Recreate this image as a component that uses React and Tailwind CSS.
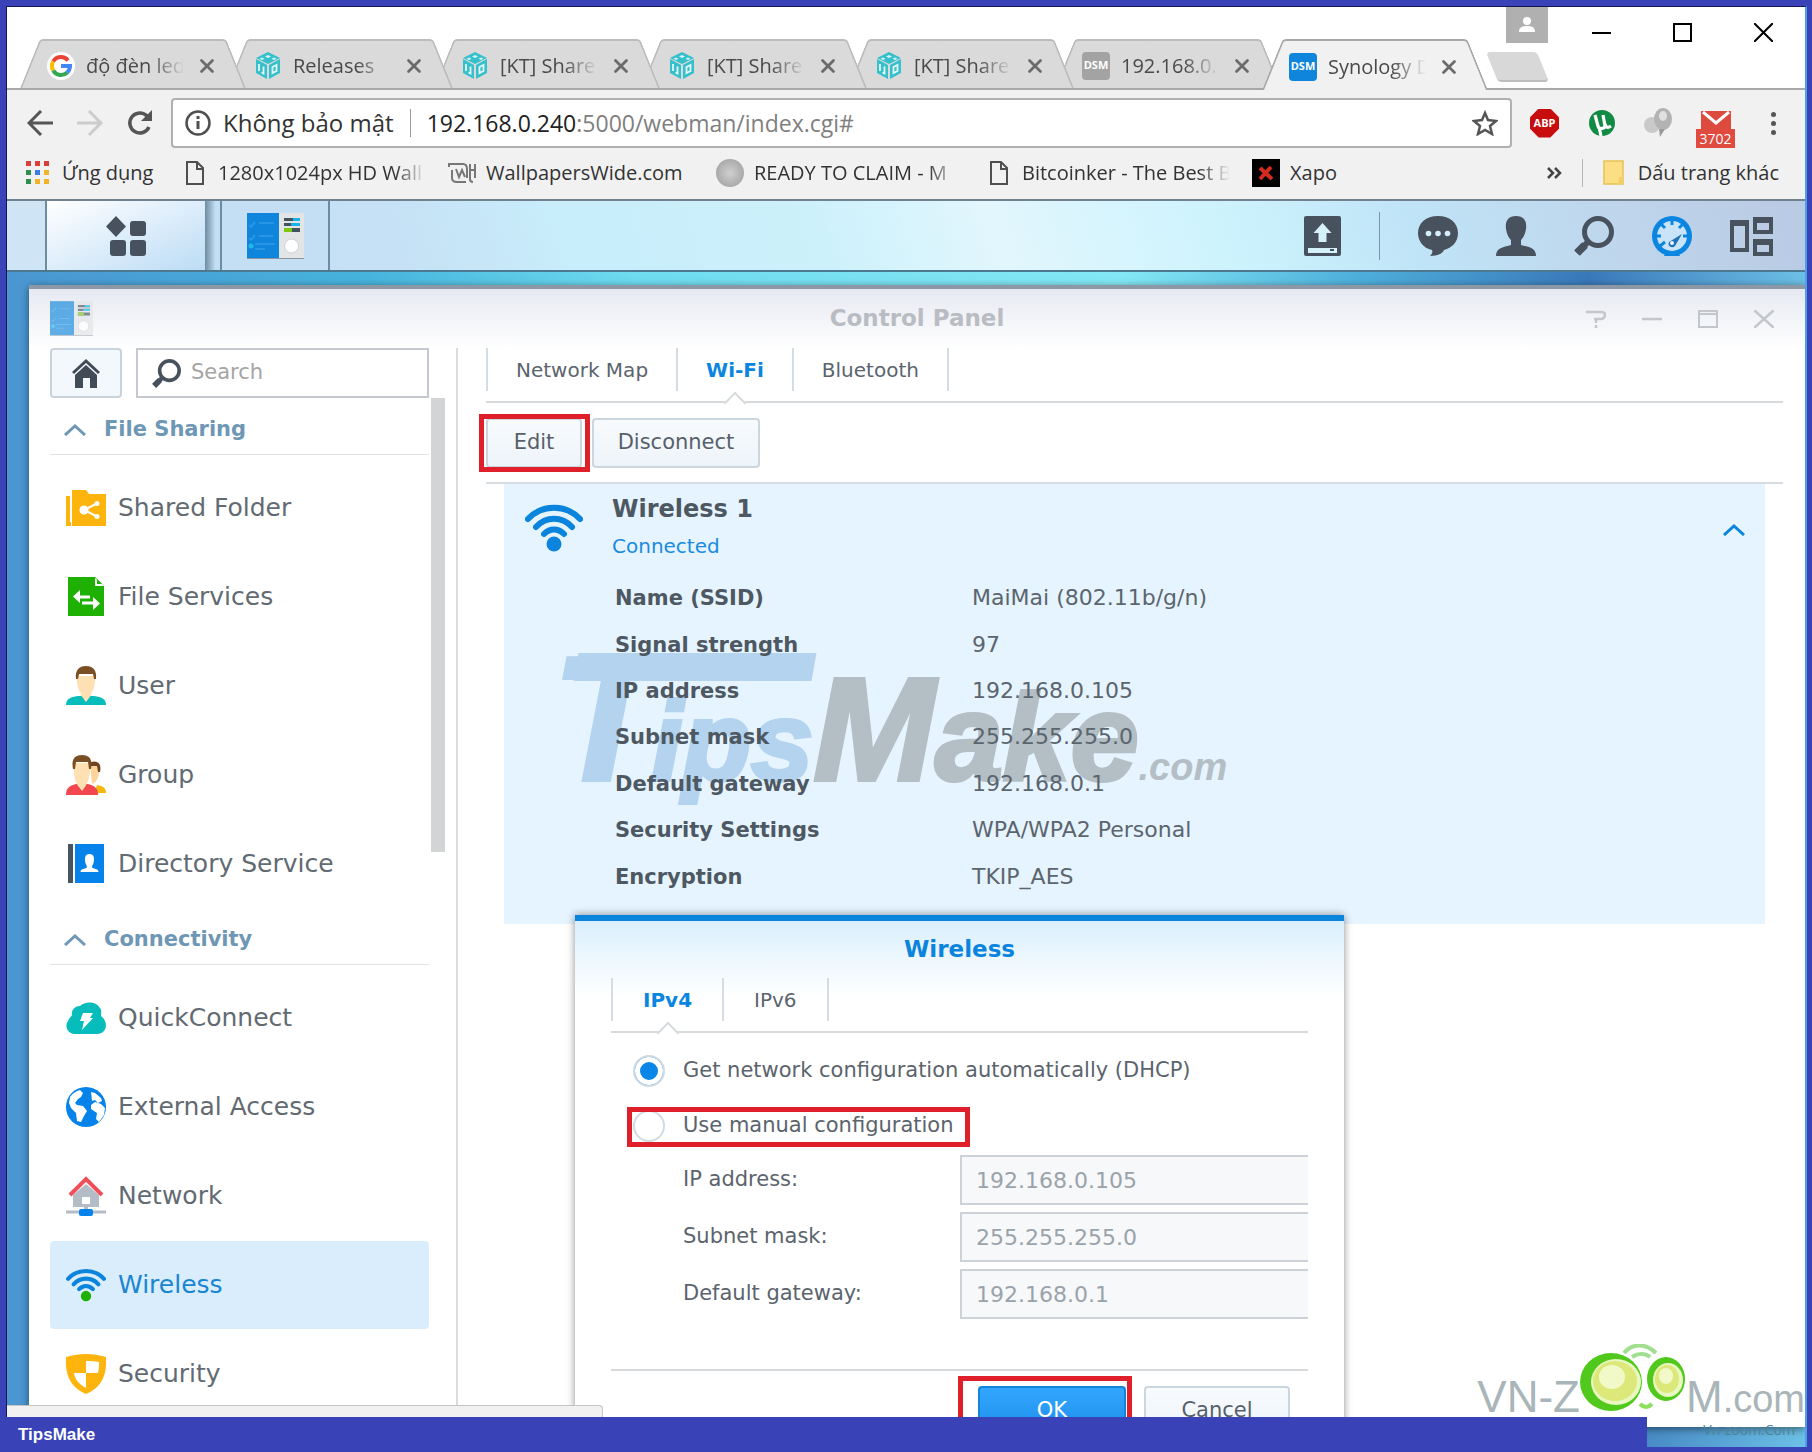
import React, { useState } from 'react';
import clsx from 'clsx';
import { X } from 'lucide-react';

const browserTabs = [
  { title: 'độ đèn led', icon: 'google' },
  { title: 'Releases', icon: 'cube' },
  { title: '[KT] Share', icon: 'cube' },
  { title: '[KT] Share', icon: 'cube' },
  { title: '[KT] Share', icon: 'cube' },
  { title: '192.168.0.', icon: 'dsmGray' },
  { title: 'Synology D', icon: 'dsm', active: true },
];

const connectionRows = [
  ['Name (SSID)', 'MaiMai (802.11b/g/n)'],
  ['Signal strength', '97'],
  ['IP address', '192.168.0.105'],
  ['Subnet mask', '255.255.255.0'],
  ['Default gateway', '192.168.0.1'],
  ['Security Settings', 'WPA/WPA2 Personal'],
  ['Encryption', 'TKIP_AES'],
];

const manualFields = [
  { id: 'ip', label: 'IP address:', value: '192.168.0.105' },
  { id: 'mask', label: 'Subnet mask:', value: '255.255.255.0' },
  { id: 'gateway', label: 'Default gateway:', value: '192.168.0.1' },
];

/* ---------- icons ---------- */

const GoogleIcon = () => (
  <svg viewBox="0 0 28 28" className="size-7">
    <circle cx="14" cy="14" r="14" fill="#fff" />
    <g fill="none" strokeWidth="4">
      <path d="M21 8.5A9 9 0 0 0 6.2 9.5" stroke="#ea4335" />
      <path d="M6.2 9.5a9 9 0 0 0 0 9" stroke="#fbbc05" />
      <path d="M6.2 18.5a9 9 0 0 0 14 2" stroke="#34a853" />
      <path d="M14 14h9a9 9 0 0 1-2.8 6.5" stroke="#4285f4" />
    </g>
  </svg>
);

const CubeIcon = () => (
  <svg viewBox="0 0 28 28" className="size-7">
    <path d="M2 7l11 6v14L2 21zM26 7l-11 6v14l11-6z" fill="#35c0cc" />
    <path d="M14 0l12 6-12 6L2 6z" fill="#35c0cc" />
    <path d="M14 3l3 1.5L14 6l-3-1.5zM8 5.500l2.500 1.200L8 8 5.500 6.700zM20 5.500l2.500 1.200L20 8l-2.500-1.300z" fill="#d8f3f5" />
    <path d="M5 12v7M9.500 14.500v7l-2-1M18.500 15v6l4-2v-6z" fill="none" stroke="#e6f8f9" strokeWidth="1.800" />
  </svg>
);

const DsmIcon = ({ gray }) => (
  <span
    className={clsx(
      'flex size-7 items-center justify-center rounded-sm text-[11px] font-bold text-white',
      gray ? 'bg-[#a3a3a3]' : 'bg-[#0f86dc]',
    )}
  >
    DSM
  </span>
);

const ControlPanelIcon = ({ className }) => (
  <svg viewBox="0 0 57 46" className={className}>
    <path d="M0 45h57v1H0z" fill="#8a97a3" />
    <path d="M0 0h32v45H0z" fill="#0f86dc" />
    <path d="M32 0h25v45H32z" fill="#e2e4e6" />
    <path d="M2 12l2 2 4-5M2 25l2 2 4-5M12 10h15M12 23h14M8 31h20M8 36h10" fill="none" stroke="#2f9be8" strokeWidth="1.500" />
    <circle cx="4" cy="33" r="2.500" fill="#20b8e8" />
    <path d="M37 5h16v3H37zM37 10h16v3H37zM37 15h16v4H37z" fill="#44545e" />
    <path d="M46 5h7v3h-7zM44 10h9v3h-9z" fill="#16b4e6" />
    <path d="M37 15h8v4h-8z" fill="#7cc813" />
    <circle cx="44.500" cy="33" r="7" fill="#fff" stroke="#cfd2d4" />
  </svg>
);

const PageIcon = () => (
  <svg viewBox="0 0 20 26" className="h-[26px] w-5" fill="none" stroke="#4f4f4f" strokeWidth="2">
    <path d="M2 2h10l6 6v16H2zM12 2v7h6" />
  </svg>
);

const MagnifierIcon = ({ className }) => (
  <svg viewBox="0 0 40 40" className={className} fill="none" stroke="currentColor">
    <circle cx="24" cy="16" r="13.500" strokeWidth="5" />
    <path d="M14 26L3 37" strokeWidth="6" />
    <path d="M11 29L3 37" strokeWidth="8" />
  </svg>
);

const ChevronUp = ({ className }) => (
  <svg viewBox="0 0 22 12" className={className} fill="none" stroke="currentColor" strokeWidth="3">
    <path d="M1 11L11 2l10 9" />
  </svg>
);

const WifiIcon = ({ className, dot = '#0a84dd' }) => (
  <svg viewBox="0 0 58 48" className={className} fill="none" stroke="#0a84dd" strokeWidth="6" strokeLinecap="round">
    <path d="M3 15C17 0 41 0 55 15" />
    <path d="M11 23C21 12 37 12 47 23" />
    <path d="M19 30c6-6 14-6 20 0" />
    <circle cx="29" cy="40" r="7.500" fill={dot} stroke="none" />
  </svg>
);

const SharedFolderIcon = () => (
  <svg viewBox="0 0 40 40" className="size-10">
    <path d="M0 8h4v26h1v4H0z" fill="#fdb40d" />
    <path d="M6 2h14l3 4h17v32H6z" fill="#fdb40d" />
    <path d="M30 16L18 22l12 6" fill="none" stroke="#fff" strokeWidth="2" />
    <circle cx="18" cy="22" r="4.500" fill="#fff" />
    <circle cx="31" cy="15.500" r="2.500" fill="#fff" />
    <circle cx="31" cy="28.500" r="2.500" fill="#fff" />
  </svg>
);

const FileServicesIcon = () => (
  <svg viewBox="0 0 40 40" className="size-10">
    <path d="M2 0h27l9 9v30H2z" fill="#1fb004" />
    <path d="M29 1v8h9z" fill="#fff" />
    <path d="M31 2v5h5z" fill="#1fb004" />
    <path d="M12 20h12M16 26h13" stroke="#fff" strokeWidth="3" />
    <path d="M14 13v13l-7-6.500zM27 20v13l7-6.500z" fill="#fff" />
  </svg>
);

const UserIcon = () => (
  <svg viewBox="0 0 40 40" className="size-10">
    <path d="M0 39c0-6 4-8 12-9h16c8 1 12 3 12 9z" fill="#06bdbb" />
    <path d="M14 28l6 8 6-8z" fill="#ffe0b2" />
    <path d="M11 10h18c1 10-3 20-9 20S10 20 11 10z" fill="#ffe0b2" />
    <path d="M10 13C9 4 13 0 20 0s11 4 10 13h-2l-1-5H13l-1 5z" fill="#7a4f24" />
  </svg>
);

const GroupIcon = () => (
  <svg viewBox="0 0 40 40" className="size-10">
    <path d="M28 38h12c0-5-3-7-9-8z" fill="#f5b70f" />
    <path d="M24 9h9c1 9-1 18-7 20z" fill="#ffd49c" />
    <path d="M25 7c6-2 11 1 9 10h-2l-1-6h-6z" fill="#6e4322" />
    <path d="M0 40c0-7 3-9 10-11h12c7 2 10 4 10 11z" fill="#f2474e" />
    <path d="M8 8h16c1 10-2 20-5 24l-3 4-3-4C9 28 7 18 8 8z" fill="#ffe0b2" />
    <path d="M7 14C5 4 9 0 16 0s11 4 9 14h-2l-1-7H10l-1 7z" fill="#7a4f24" />
  </svg>
);

const DirectoryIcon = () => (
  <svg viewBox="0 0 40 40" className="size-10">
    <path d="M2 0h5v39H2z" fill="#475560" />
    <path d="M9 0h29v39H9z" fill="#0583ea" />
    <path d="M23.500 10c5 0 5 5 4 9-1 3-2 3-1 5 3 1 6 1 6 4h-18c0-3 3-3 6-4 1-2 0-2-1-5-1-4-1-9 4-9z" fill="#fff" />
  </svg>
);

const QuickConnectIcon = () => (
  <svg viewBox="0 0 40 40" className="size-10">
    <path d="M10 36c-8 0-12-7-8-13 1-3 3-4 4-6-1-5 3-9 8-9 5-5 16-5 20 2 2 3 1 5 1 8 8 6 6 18-4 18z" fill="#06bdbb" />
    <path d="M17 15h10l-3 5h3L16 32l2-9h-4z" fill="#fff" />
  </svg>
);

const GlobeIcon = () => (
  <svg viewBox="0 0 40 40" className="size-10">
    <circle cx="20" cy="20" r="20" fill="#0583ea" />
    <path d="M4 10c3-4 6-6 10-7l3 3-2 4-3 2-3 4 2 2 6 1 4 5-3 5-3 6-4-1-1-8-5-5-2-5z" fill="#fff" />
    <path d="M25 5l4 1 6 5 1 3-4 2-3-3-3 1zM25 18l4-3 6 2 4 4-1 7-5 7-3-3 1-6-6-4z" fill="#fff" />
  </svg>
);

const NetworkIcon = () => (
  <svg viewBox="0 0 40 40" className="size-10">
    <path d="M20 8l13 11v12H7V19z" fill="#b4bdc6" />
    <path d="M16 21h8v7h-8z" fill="#fff" />
    <path d="M4 19L20 3l16 16" fill="none" stroke="#ee4f58" strokeWidth="4" />
    <path d="M0 36h40" stroke="#b4bdc6" strokeWidth="3" />
    <path d="M18 30h4v4h-4z" fill="#b4bdc6" />
    <rect x="13" y="33" width="14" height="7" rx="2" fill="#0583ea" />
  </svg>
);

const ShieldIcon = () => (
  <svg viewBox="0 0 40 40" className="size-10">
    <path d="M0 3c14-4 26-4 40 0 1 18-4 30-20 37C4 33-1 21 0 3z" fill="#fdb40d" />
    <path d="M20 7c5 0 9 0 13 1 0 4 0 7-1 11H20z" fill="#fff" />
    <path d="M8 19h12v15c-7-4-11-8-12-15z" fill="#fff" />
  </svg>
);

const sidebarSections = [
  {
    title: 'File Sharing',
    items: [
      { name: 'Shared Folder', icon: <SharedFolderIcon /> },
      { name: 'File Services', icon: <FileServicesIcon /> },
      { name: 'User', icon: <UserIcon /> },
      { name: 'Group', icon: <GroupIcon /> },
      { name: 'Directory Service', icon: <DirectoryIcon /> },
    ],
  },
  {
    title: 'Connectivity',
    items: [
      { name: 'QuickConnect', icon: <QuickConnectIcon /> },
      { name: 'External Access', icon: <GlobeIcon /> },
      { name: 'Network', icon: <NetworkIcon /> },
      { name: 'Wireless', icon: <WifiIcon className="h-9 w-10" dot="#1fb004" />, active: true },
      { name: 'Security', icon: <ShieldIcon /> },
    ],
  },
];

/* ---------- browser ---------- */

const BrowserTab = ({ tab, order }) => {
  const side = tab.active ? 'bg-[#f1f1f1] border-[#a8a8a8]' : 'bg-[#dadada] border-[#bcbcbc]';
  return (
    <div
      className={clsx('relative -ml-[19px] w-[226px] shrink-0', tab.active ? 'h-[51px]' : 'mb-[2px] h-[49px]')}
      style={{ zIndex: tab.active ? 20 : 10 - order }}
    >
      <span className={clsx('absolute inset-y-0 left-0 w-1/2 origin-bottom-left -skew-x-[22deg] rounded-tl-sm border-t-2 border-l-2', side)} />
      <span className={clsx('absolute inset-y-0 right-0 w-1/2 origin-bottom-right skew-x-[22deg] rounded-tr-sm border-t-2 border-r-2', side)} />
      <div className="relative flex h-full items-center pt-1 pl-[27px]">
        {tab.icon === 'google' && <GoogleIcon />}
        {tab.icon === 'cube' && <CubeIcon />}
        {tab.icon === 'dsmGray' && <DsmIcon gray />}
        {tab.icon === 'dsm' && <DsmIcon />}
        <span className="ml-[11px] w-[98px] overflow-hidden text-xl whitespace-nowrap text-[#4a4a4a] [mask-image:linear-gradient(to_right,#000_65%,transparent)]">
          {tab.title}
        </span>
        <button type="button" aria-label="Close tab" className="ml-3 text-[#6b6b6b]">
          <X size={22} strokeWidth={3} />
        </button>
      </div>
    </div>
  );
};

const TabStrip = () => (
  <header className="grid h-[83px] shrink-0 bg-white shadow-[inset_0_-2px_0_#a8a8a8]">
    <div className="col-start-1 row-start-1 flex items-end pl-8">
      {browserTabs.map((tab, index) => (
        <BrowserTab key={index} tab={tab} order={index} />
      ))}
      <button
        type="button"
        aria-label="New tab"
        className="mb-2 ml-1 h-[30px] w-[51px] skew-x-[22deg] rounded-sm border-b-2 border-[#bdbdbd] bg-[#d8d8d8]"
      />
    </div>
    <div className="col-start-1 row-start-1 flex items-start self-start justify-self-end pr-8">
      <button type="button" aria-label="Profile" className="flex h-9 w-[42px] items-center justify-center bg-[#b0b0b0]">
        <svg viewBox="0 0 16 16" className="size-4" fill="#fff">
          <circle cx="8" cy="4" r="4" />
          <path d="M0 15c0-4 2-6 8-6s8 2 8 6z" />
        </svg>
      </button>
      <div className="mt-4 ml-11 flex gap-[62px] text-black">
        <button type="button" aria-label="Minimize">
          <svg viewBox="0 0 19 19" className="size-[19px]"><path d="M0 10h19" stroke="#000" strokeWidth="2" /></svg>
        </button>
        <button type="button" aria-label="Maximize">
          <svg viewBox="0 0 19 19" className="size-[19px]"><path d="M1 1h17v17H1z" fill="none" stroke="#000" strokeWidth="2" /></svg>
        </button>
        <button type="button" aria-label="Close">
          <svg viewBox="0 0 19 19" className="size-[19px]"><path d="M0 0l19 19M19 0L0 19" stroke="#000" strokeWidth="2" /></svg>
        </button>
      </div>
    </div>
  </header>
);

const AddressBar = () => (
  <div className="flex shrink-0 items-center bg-[#f1f1f1] pt-2 pr-7 pl-5">
    <button type="button" aria-label="Back">
      <svg viewBox="0 0 26 26" className="size-[26px]" fill="none" stroke="#555" strokeWidth="3">
        <path d="M26 13H3M14 1L2 13l12 12" />
      </svg>
    </button>
    <button type="button" aria-label="Forward" className="ml-6">
      <svg viewBox="0 0 26 26" className="size-[26px]" fill="none" stroke="#ccc" strokeWidth="3">
        <path d="M0 13h23M12 1l12 12-12 12" />
      </svg>
    </button>
    <button type="button" aria-label="Reload" className="ml-6">
      <svg viewBox="0 0 26 26" className="size-[26px]">
        <path d="M22 17a10 10 0 1 1-2-11" fill="none" stroke="#555" strokeWidth="3.500" />
        <path d="M25 0v11H14z" fill="#555" />
      </svg>
    </button>
    <div className="ml-[18px] flex h-[50px] flex-1 items-center rounded border-2 border-[#b0b0b0] bg-white pr-3 pl-3">
      <svg viewBox="0 0 26 26" className="size-[26px] shrink-0" fill="none" stroke="#4f4f4f">
        <circle cx="13" cy="13" r="11.500" strokeWidth="2.500" />
        <path d="M13 11v8M13 6v3" strokeWidth="3" />
      </svg>
      <span className="ml-3 text-2xl whitespace-nowrap text-[#333]">Không bảo mật</span>
      <span className="mx-4 h-7 w-px bg-[#999]" />
      <span className="flex-1 text-[23px] text-[#808080]">
        <span className="text-[#222]">192.168.0.240</span>:5000/webman/index.cgi#
      </span>
      <button type="button" aria-label="Bookmark">
        <svg viewBox="0 0 26 26" className="size-[26px]" fill="none" stroke="#555" strokeWidth="2.500">
          <path d="M13 3l3 7 8 1-6 5 2 8-7-4-7 4 2-8-6-5 8-1z" />
        </svg>
      </button>
    </div>
    <button
      type="button"
      className="ml-[18px] flex size-[29px] items-center justify-center bg-[#c70d0d] text-[11px] font-bold text-white [clip-path:polygon(30%_0,70%_0,100%_30%,100%_70%,70%_100%,30%_100%,0_70%,0_30%)]"
    >
      ABP
    </button>
    <button type="button" aria-label="uTorrent" className="ml-[30px]">
      <svg viewBox="0 0 26 26" className="size-[26px]">
        <circle cx="13" cy="13" r="13" fill="#118a44" />
        <path d="M6 5l3 11c1 4 6 3 7 0L14 5M16 14c1 4 3 4 6 2M10 17l2 9" fill="none" stroke="#fff" strokeWidth="3.200" />
      </svg>
    </button>
    <button type="button" aria-label="Balloons" className="ml-[29px]">
      <svg viewBox="0 0 28 30" className="h-[30px] w-7">
        <ellipse cx="8" cy="17" rx="8" ry="8" fill="#c9c9c9" />
        <ellipse cx="19" cy="11" rx="9" ry="11" fill="#b3b3b3" />
        <ellipse cx="19" cy="8" rx="4" ry="5" fill="#e0e0e0" />
        <path d="M15 21h6l-5 8z" fill="#9a9a9a" />
      </svg>
    </button>
    <button type="button" className="ml-6 flex flex-col items-center self-end">
      <svg viewBox="0 0 30 18" className="h-[18px] w-[30px]">
        <path d="M0 0h30v18H0z" fill="#dd4b3e" />
        <path d="M2 1l13 11L28 1" fill="none" stroke="#fff" strokeWidth="3" />
      </svg>
      <span className="flex h-[19px] w-[39px] items-center justify-center bg-[#e04a3f] text-sm text-white">3702</span>
    </button>
    <button type="button" aria-label="Menu" className="ml-9 flex w-[6px] flex-col gap-1">
      <span className="size-[5px] rounded-full bg-[#555]" />
      <span className="size-[5px] rounded-full bg-[#555]" />
      <span className="size-[5px] rounded-full bg-[#555]" />
    </button>
  </div>
);

const Bookmark = ({ icon, className, children }) => (
  <a href="#bookmark" className="flex items-center">
    {icon}
    <span className={clsx('overflow-hidden text-xl whitespace-nowrap', className)}>{children}</span>
  </a>
);

const appColors = ['bg-[#d8403a]', 'bg-[#d8403a]', 'bg-[#d8403a]', 'bg-[#2f8f4e]', 'bg-[#3b7de0]', 'bg-[#f0b429]', 'bg-[#2f8f4e]', 'bg-[#f0b429]', 'bg-[#f0b429]'];

const BookmarksBar = () => (
  <nav className="flex h-[53px] shrink-0 items-center border-b-2 border-[#70828f] bg-[#f1f1f1] pr-[26px] pb-[2px] pl-[19px] text-[#333]">
    <Bookmark
      className="ml-[13px] w-[97px]"
      icon={
        <span className="grid grid-cols-3 gap-1">
          {appColors.map((color, index) => (
            <span key={index} className={clsx('size-[5px]', color)} />
          ))}
        </span>
      }
    >
      Ứng dụng
    </Bookmark>
    <span className="ml-[26px]" />
    <Bookmark icon={<PageIcon />} className="ml-[13px] w-[208px] [mask-image:linear-gradient(to_right,#000_85%,transparent)]">
      1280x1024px HD Wall
    </Bookmark>
    <span className="ml-[22px]" />
    <Bookmark
      className="ml-[10px] w-[208px]"
      icon={
        <svg viewBox="0 0 28 22" className="h-[22px] w-7" fill="none" stroke="#777" strokeWidth="2">
          <path d="M1 5V2h14c3 0 4 2 4 5v9M4 8v8c0 3 2 4 5 4h9M8 7l3 8 3-7 3 7M22 2v15c0 2 1 3 3 3M27 2v14M22 8h5" />
        </svg>
      }
    >
      WallpapersWide.com
    </Bookmark>
    <span className="ml-[22px]" />
    <Bookmark
      className="ml-[10px] w-[205px] [mask-image:linear-gradient(to_right,#000_85%,transparent)]"
      icon={<span className="size-7 rounded-full bg-radial from-[#d0d0d0] to-[#9a9a9a]" />}
    >
      READY TO CLAIM - M
    </Bookmark>
    <span className="ml-[30px]" />
    <Bookmark icon={<PageIcon />} className="ml-[13px] w-[208px] [mask-image:linear-gradient(to_right,#000_85%,transparent)]">
      Bitcoinker - The Best B
    </Bookmark>
    <span className="ml-[22px]" />
    <Bookmark
      className="ml-[10px]"
      icon={
        <svg viewBox="0 0 28 28" className="size-7">
          <path d="M0 0h28v28H0z" fill="#000" />
          <path d="M8 9l12 11M19 8L8 20" stroke="#d52b1e" strokeWidth="4" />
        </svg>
      }
    >
      Xapo
    </Bookmark>
    <button type="button" aria-label="More bookmarks" className="ml-auto">
      <svg viewBox="0 0 15 12" className="h-3 w-[15px]" fill="none" stroke="#444" strokeWidth="2.500">
        <path d="M1 1l5 5-5 5M8 1l5 5-5 5" />
      </svg>
    </button>
    <span className="mx-5 h-7 w-px bg-[#b5b5b5]" />
    <Bookmark
      className="ml-[14px]"
      icon={
        <svg viewBox="0 0 21 25" className="h-[25px] w-[21px]">
          <path d="M1 1h19v23H1z" fill="#fcdf84" stroke="#e8c252" strokeWidth="1.500" />
          <path d="M16 17h4v7h-5z" fill="#f2cf66" />
        </svg>
      }
    >
      Dấu trang khác
    </Bookmark>
  </nav>
);

/* ---------- DSM desktop ---------- */

const Taskbar = () => (
  <nav className="flex h-[71px] shrink-0 border-b-2 border-[#4c7890] bg-[linear-gradient(72deg,#c3dff3_0%,#c6e1f5_22%,#c8edfb_31%,#ccf1fb_45%,#e2f6fd_55%,#ccf3fd_68%,#c0e4f7_78%,#bfd7ed_88%,#b9cae3_100%)]">
    <span className="w-10 border-r-2 border-[#6c8ca3] bg-[#cfe5f5]" />
    <button type="button" aria-label="Main menu" className="flex w-[158px] items-center justify-center bg-linear-to-br from-white to-[#bcdcf5]">
      <svg viewBox="0 0 40 40" className="size-10" fill="#48525f">
        <path d="M10 0l10 10.500L10 21 0 10.500z" />
        <rect x="24" y="5" width="16" height="15" rx="3" />
        <rect x="4" y="24" width="16" height="16" rx="3" />
        <rect x="24" y="24" width="16" height="16" rx="3" />
      </svg>
    </button>
    <span className="w-[15px] bg-linear-to-r from-[#6f8ba0] to-[#c3dff3] to-70%" />
    <button type="button" aria-label="Control Panel" className="flex w-[110px] items-center justify-center border-x-2 border-[#6c8ca3] bg-[#c4def3]">
      <ControlPanelIcon className="h-[46px] w-[57px]" />
    </button>
    <div className="flex flex-1 items-center justify-end gap-[38px] pr-8 text-[#48525f]">
      <button type="button" aria-label="Upload queue">
        <svg viewBox="0 0 37 40" className="h-10 w-[37px]">
          <rect width="37" height="40" rx="2" fill="currentColor" />
          <path d="M18.500 7l9 10h-5v9h-8v-9h-5z" fill="#d5f2fb" />
          <path d="M4 32h29v5H4z" fill="#d5f2fb" />
          <path d="M26 33h4v2h-4z" fill="currentColor" />
        </svg>
      </button>
      <span className="h-12 w-px bg-[#7d97a8]" />
      <button type="button" aria-label="Notifications">
        <svg viewBox="0 0 40 40" className="size-10">
          <path d="M20 0c12 0 20 7 20 17 0 9-6 15-14 17-2 4-7 6-14 6 2-2 3-4 2-6C5 32 0 25 0 17 0 7 8 0 20 0z" fill="currentColor" />
          <g fill="#d5eefb">
            <circle cx="10.500" cy="17.500" r="2.800" />
            <circle cx="20" cy="17.500" r="2.800" />
            <circle cx="29.500" cy="17.500" r="2.800" />
          </g>
        </svg>
      </button>
      <button type="button" aria-label="Options">
        <svg viewBox="0 0 40 40" className="size-10" fill="currentColor">
          <path d="M20 0c8 0 11 5 10 13-1 6-3 9-5 11v5c6 2 15 2 15 11H0c0-9 9-9 15-11v-5c-2-2-4-5-5-11C9 5 12 0 20 0z" />
        </svg>
      </button>
      <button type="button" aria-label="Search">
        <MagnifierIcon className="size-10" />
      </button>
      <button type="button" aria-label="Resource monitor">
        <svg viewBox="0 0 40 40" className="size-10">
          <circle cx="20" cy="20" r="20" fill="#0a86e2" />
          <circle cx="20" cy="20" r="15" fill="#c9e4f8" />
          <path d="M20 4v5M31 8l-4 4M9 8l4 4M4 20h5M36 20h-5M8 30l5-4" stroke="#0a86e2" strokeWidth="3" />
          <path d="M30 18L23 30c-3 3-8 0-6-4z" fill="#1f72b8" />
          <circle cx="20" cy="27" r="2" fill="#eaf6ff" />
          <path d="M12 40c2-6 14-6 16 0z" fill="#0a86e2" />
        </svg>
      </button>
      <button type="button" aria-label="Widgets">
        <svg viewBox="0 0 43 40" className="h-10 w-[43px]" fill="none" stroke="currentColor" strokeWidth="4">
          <path d="M2 6h15v28H2zM25 3h16v13H25zM25 25h16v13H25z" />
          <path d="M0 7h19M23 4h20M23 26h20" strokeWidth="6" />
        </svg>
      </button>
    </div>
  </nav>
);

const TitleBar = () => (
  <div className="grid h-[59px] shrink-0 grid-cols-[1fr_auto_1fr] items-center px-[21px]">
    <ControlPanelIcon className="h-[35px] w-[43px] opacity-65" />
    <h1 className="text-[23px] font-bold text-[#b9bcc2]">Control Panel</h1>
    <div className="flex justify-end gap-9 pr-[10px]">
      <button type="button" aria-label="Help">
        <svg viewBox="0 0 20 18" className="h-[18px] w-5" fill="none" stroke="#c3c6cb" strokeWidth="2.500">
          <path d="M0 2h15c2 0 4 1 4 3s-2 4-4 4H8M10 9v4M10 15v3" />
        </svg>
      </button>
      <button type="button" aria-label="Minimize window">
        <svg viewBox="0 0 20 18" className="h-[18px] w-5"><path d="M0 9h20" stroke="#c3c6cb" strokeWidth="2.500" /></svg>
      </button>
      <button type="button" aria-label="Maximize window">
        <svg viewBox="0 0 20 18" className="h-[18px] w-5" fill="none" stroke="#c3c6cb" strokeWidth="2"><path d="M1 1h18v16H1zM1 4h18" /></svg>
      </button>
      <button type="button" aria-label="Close window">
        <svg viewBox="0 0 20 18" className="h-[18px] w-5"><path d="M0 0l20 18M20 0L0 18" stroke="#c3c6cb" strokeWidth="2.500" /></svg>
      </button>
    </div>
  </div>
);

const Sidebar = () => (
  <aside className="flex w-[429px] shrink-0 flex-col border-r-2 border-[#dcdcdc] pl-[21px]">
    <div className="flex shrink-0 gap-[14px] pr-[27px]">
      <button type="button" aria-label="Home" className="flex h-[50px] w-[72px] items-center justify-center rounded border-2 border-[#c9d3dc] bg-[#f3f8fc]">
        <svg viewBox="0 0 28 29" className="h-[29px] w-7" fill="#424c57">
          <path d="M14 0l14 13-2 2L14 4 2 15l-2-2z" />
          <path d="M14 6l11 10v13h-7V19h-7v10H3V16z" />
        </svg>
      </button>
      <label className="flex h-[50px] min-w-0 flex-1 items-center border-2 border-[#c5c9cf] bg-white pl-[14px]">
        <MagnifierIcon className="size-[29px] shrink-0 text-[#48525f]" />
        <input type="text" aria-label="Search" placeholder="Search" className="ml-[10px] w-full text-[21px] outline-none placeholder:text-[#a5a5a5]" />
      </label>
    </div>
    <div className="flex min-h-0 flex-1 overflow-hidden">
      <div className="flex-1">
        {sidebarSections.map((section) => (
          <section key={section.title}>
            <h2 className="mt-2 mb-[9px] border-b border-[#dfe4e8] text-[21px] font-bold text-[#6d97b5]">
              <button type="button" className="flex h-12 w-full items-center gap-[18px] pl-[14px]">
                <ChevronUp className="h-3 w-[22px]" />
                {section.title}
              </button>
            </h2>
            <ul>
              {section.items.map((item) => (
                <li key={item.name} className="mb-px">
                  <a
                    href="#section"
                    className={clsx(
                      'flex h-[88px] items-center gap-3 rounded pl-4 text-[25px]',
                      item.active ? 'bg-[#d9edfc] text-[#1a86d2]' : 'text-[#626a72]',
                    )}
                  >
                    {item.icon}
                    {item.name}
                  </a>
                </li>
              ))}
            </ul>
          </section>
        ))}
      </div>
      <div className="mr-[11px] ml-[2px] h-[454px] w-[14px] bg-[#d2d4d5]" />
    </div>
  </aside>
);

const TabList = ({ tabs, active, onChange, tabClass }) => (
  <div className="border-b-2 border-[#d6dadd]">
    <div className="flex pb-[10px]" role="tablist">
      {tabs.map((tab) => (
        <button
          key={tab}
          type="button"
          role="tab"
          aria-selected={tab === active}
          onClick={() => onChange(tab)}
          className={clsx(
            'relative h-[43px] border-l-2 border-[#d5dde3] text-xl last:border-r-2',
            tabClass,
            tab === active ? 'font-bold text-[#0a86e0]' : 'text-[#5b646d]',
          )}
        >
          {tab}
          {tab === active && (
            <span className="absolute -bottom-5 left-1/2 size-4 -translate-x-1/2 rotate-45 border-t-2 border-l-2 border-[#d6dadd] bg-white" />
          )}
        </button>
      ))}
    </div>
  </div>
);

const Highlight = ({ className }) => (
  <span className={clsx('pointer-events-none absolute border-[5px] border-[#df1f2a]', className)} />
);

const Watermark = () => (
  <div aria-hidden="true" className="pointer-events-none absolute top-[147px] left-12 flex items-baseline font-['Liberation_Sans'] leading-none font-bold text-[#b3d3ee] italic select-none">
    <span className="absolute top-[22px] left-6 h-[28px] w-[238px] -skew-x-[10deg] bg-[#b3d3ee]" />
    <span className="text-[176px] [-webkit-text-stroke:4px_#b3d3ee]">T</span>
    <span className="-ml-2 text-[112px] [-webkit-text-stroke:4px_#b3d3ee]">ips</span>
    <span className="text-[146px] text-[#b3bec5] [-webkit-text-stroke:4px_#b3bec5]">M</span>
    <span className="text-[122px] text-[#b3bec5] [-webkit-text-stroke:4px_#b3bec5]">ake</span>
    <span className="text-[38px] text-[#b3bec5]">.com</span>
  </div>
);

const WirelessPanel = () => (
  <section className="relative mx-[18px] flex bg-[#e6f4ff] pt-[10px] pb-6 pl-[21px] text-[#4d5862]">
    <Watermark />
    <WifiIcon className="mt-[10px] mr-[29px] h-12 w-[58px] shrink-0" />
    <div className="relative flex-1">
      <h2 className="text-2xl leading-[30px] font-bold">Wireless 1</h2>
      <p className="mt-2 text-xl text-[#1a8be0]">Connected</p>
      <table className="mt-[15px] ml-[3px] h-[325px] text-left leading-7">
        <tbody>
          {connectionRows.map(([label, value]) => (
            <tr key={label}>
              <th scope="row" className="w-[357px] text-[21px] font-bold">{label}</th>
              <td className="text-[22px] text-[#5b656e]">{value}</td>
            </tr>
          ))}
        </tbody>
      </table>
    </div>
    <button type="button" aria-label="Collapse" className="mt-[30px] mr-5 self-start text-[#0a84dd]">
      <ChevronUp className="h-3 w-[22px]" />
    </button>
  </section>
);

const toolButton = 'h-[50px] rounded border-2 border-[#ccd6de] bg-linear-to-b from-[#f8fbfe] to-[#edf4f9] text-[21px] text-[#57606a]';

const WirelessDialog = () => {
  const [tab, setTab] = useState('IPv4');
  const [mode, setMode] = useState('dhcp');
  const radio =
    'size-8 appearance-none rounded-full border-2 border-[#d0dae1] bg-white checked:bg-[#0a86e8] checked:shadow-[inset_0_0_0_5px_#fff]';

  return (
    <div
      role="dialog"
      aria-label="Wireless"
      className="absolute top-[626px] left-[546px] z-10 w-[769px] border-t-[6px] border-[#0a84dd] bg-white bg-[linear-gradient(#daeffd,#fff_76px)] px-9 pb-6 text-[21px] text-[#5b646d] shadow-[0_0_8px_rgba(0,0,0,0.45)]"
    >
      <h2 className="flex h-[57px] items-center justify-center text-[23px] font-bold text-[#0a84dd]">Wireless</h2>
      <TabList tabs={['IPv4', 'IPv6']} active={tab} onChange={setTab} tabClass="px-[30px]" />
      <div className="flex flex-col items-start gap-[23px] pt-[22px] pl-[22px]">
        <label className="flex h-8 items-center gap-[18px]">
          <input type="radio" name="mode" className={radio} checked={mode === 'dhcp'} onChange={() => setMode('dhcp')} />
          Get network configuration automatically (DHCP)
        </label>
        <label className="relative flex h-8 items-center gap-[18px]">
          <input type="radio" name="mode" className={radio} checked={mode === 'manual'} onChange={() => setMode('manual')} />
          Use manual configuration
          <Highlight className="-top-[3px] -right-4 -bottom-[5px] -left-[6px]" />
        </label>
      </div>
      <div className="mt-[13px] grid grid-cols-[277px_1fr] gap-y-[7px] pl-[72px]">
        {manualFields.map((field) => (
          <React.Fragment key={field.id}>
            <label htmlFor={field.id} className="flex h-[50px] items-center">{field.label}</label>
            <input
              id={field.id}
              type="text"
              defaultValue={field.value}
              disabled={mode === 'dhcp'}
              className="h-[50px] min-w-0 border-y-2 border-l-2 border-[#ccd2d8] bg-[#f6f8fa] pl-[14px] text-[22px] text-[#9aa3ab]"
            />
          </React.Fragment>
        ))}
      </div>
      <div className="mt-[50px] flex justify-end gap-[18px] border-t-2 border-[#d6dadd] pt-[15px] pr-[18px]">
        <div className="relative">
          <button type="button" className="h-[50px] w-[148px] rounded border-2 border-[#1583d6] bg-linear-to-b from-[#33a6ff] to-[#1b8eea] text-[21px] text-white">
            OK
          </button>
          <Highlight className="-top-[10px] -right-[6px] -bottom-[10px] -left-5" />
        </div>
        <button type="button" className={clsx(toolButton, 'w-[146px]')}>Cancel</button>
      </div>
    </div>
  );
};

const ZoomLogo = () => (
  <div aria-hidden="true" className="pointer-events-none absolute right-0 bottom-0 flex items-baseline font-['Liberation_Sans'] text-[44px] leading-[56px] text-[#a9b5b8] select-none">
    VN-Z
    <svg viewBox="0 0 106 68" className="-mb-1 h-[68px] w-[106px]">
      <path d="M44 9c8-10 22-10 32 0M52 13c6-4 13-4 18 0" fill="none" stroke="#9fdf8f" strokeWidth="4" />
      <path d="M60 60c4 4 8 4 12 0" fill="none" stroke="#8be05c" strokeWidth="4" />
      <ellipse cx="31" cy="38" rx="31" ry="29" fill="#50c91c" />
      <ellipse cx="36" cy="38" rx="25" ry="23" fill="#e9f7c0" />
      <ellipse cx="35" cy="37" rx="22" ry="20" fill="#dde87a" />
      <ellipse cx="32" cy="33" rx="13" ry="12" fill="#f2f9c8" />
      <ellipse cx="86" cy="35" rx="19" ry="22" fill="#50c91c" />
      <ellipse cx="88" cy="36" rx="15" ry="17" fill="#e9f7c0" />
      <ellipse cx="87" cy="35" rx="12" ry="14" fill="#dde87a" />
      <ellipse cx="86" cy="32" rx="7" ry="8" fill="#f2f9c8" />
    </svg>
    M<span className="text-[38px]">.com</span>
  </div>
);

const ControlPanelWindow = () => {
  const [tab, setTab] = useState('Wi-Fi');

  return (
    <main className="relative ml-[22px] flex min-h-0 flex-1 flex-col overflow-hidden border-t-4 border-[#8c98a5] bg-white bg-[linear-gradient(#e6e9f1,#fff_60px)] font-['DejaVu_Sans',sans-serif] shadow-[0_2px_8px_rgba(0,0,0,0.5)]">
      <TitleBar />
      <div className="flex min-h-0 flex-1">
        <Sidebar />
        <div className="min-w-0 flex-1 pr-[22px] pl-7">
          <TabList tabs={['Network Map', 'Wi-Fi', 'Bluetooth']} active={tab} onChange={setTab} tabClass="px-7" />
          <div className="flex gap-[10px] border-b-2 border-[#d6dce1] pt-[15px] pb-[14px]">
            <div className="relative">
              <button type="button" className={clsx(toolButton, 'w-24')}>Edit</button>
              <Highlight className="-top-1 -right-2 -bottom-1 -left-[7px]" />
            </div>
            <button type="button" className={clsx(toolButton, 'w-[168px]')}>Disconnect</button>
          </div>
          <WirelessPanel />
        </div>
      </div>
      <WirelessDialog />
      <ZoomLogo />
    </main>
  );
};

export default function App() {
  return (
    <div className="relative flex h-screen flex-col overflow-hidden bg-[#3943b7] pt-[6px] pr-[5px] pb-[5px] pl-[6px] font-['Open_Sans','Noto_Sans',sans-serif]">
      <div className="flex min-h-0 flex-1 flex-col border-t border-r-2 border-l border-t-[#14164f] border-r-[#4f9fe6] border-l-[#14164f]">
        <TabStrip />
        <AddressBar />
        <BookmarksBar />
        <Taskbar />
        <div className="flex min-h-0 flex-1 flex-col overflow-hidden bg-[linear-gradient(to_right,#4b96d2_0%,#46b4dd_20%,#6fdcf0_35%,#84e8f5_62%,#4fb0dc_75%,#3a78ba_88%,#6cc0e6_100%)] pt-[13px] pb-5">
          <ControlPanelWindow />
        </div>
      </div>
      <span aria-hidden="true" className="absolute right-[17px] bottom-[14px] text-sm leading-4 text-[#4d8299]">
        Vn-zoom.Com
      </span>
      <div className="absolute bottom-[35px] left-[7px] z-20 h-3 w-[596px] rounded-tr border-t border-r border-[#c4c4c4] bg-[#f1f1f1]" />
      <footer className="absolute right-[165px] bottom-0 left-0 z-20 flex h-[35px] items-center bg-[#3943b7] pl-[18px] font-['Liberation_Sans',sans-serif] text-[17px] font-bold text-white">
        TipsMake
      </footer>
    </div>
  );
}
